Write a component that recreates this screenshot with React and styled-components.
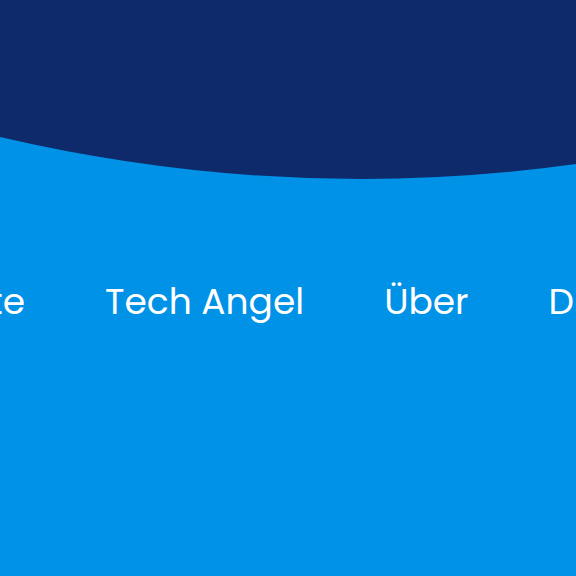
import React from "react";
import styled, { createGlobalStyle } from "styled-components";

const GlobalStyle = createGlobalStyle`
  *, *::before, *::after { box-sizing: border-box; }
  html, body { margin: 0; background: #0092e7; }
  body { overflow-x: hidden; }
`;

const Page = styled.main`
  min-height: 100vh;
  background: #0092e7;
  overflow: hidden;
`;

const Hero = styled.header`
  display: flex;
  flex-direction: column;
`;

const HeroFill = styled.div`
  height: 120px;
  background: #0f2a6a;
`;

const Curve = styled.svg`
  display: block;
  width: 100%;
  height: 60px;
`;

const Nav = styled.nav`
  display: flex;
  gap: 80px;
  padding-top: 95px;
  overflow: hidden;
`;

const NavLink = styled.a`
  display: flex;
  flex: ${({ $cut }) => ($cut ? "0 0 25px" : "none")};
  justify-content: flex-end;
  overflow: hidden;
  color: #ffffff;
  font-family: Poppins, Inter, sans-serif;
  font-size: 36px;
  line-height: 54px;
  text-decoration: none;
  white-space: nowrap;
`;

const links = [
  { label: "te", cut: true },
  { label: "Tech Angel" },
  { label: "Über" },
  { label: "D" },
];

export default function App() {
  return (
    <>
      <GlobalStyle />
      <Page>
        <Hero>
          <HeroFill />
          <Curve viewBox="0 0 576 60" preserveAspectRatio="none" aria-hidden="true">
            <path d="M0 0H576V44Q288 84 0 17Z" fill="#0f2a6a" />
          </Curve>
        </Hero>
        <Nav>
          {links.map(({ label, cut }) => (
            <NavLink key={label} href="#" $cut={cut}>
              {label}
            </NavLink>
          ))}
        </Nav>
      </Page>
    </>
  );
}
